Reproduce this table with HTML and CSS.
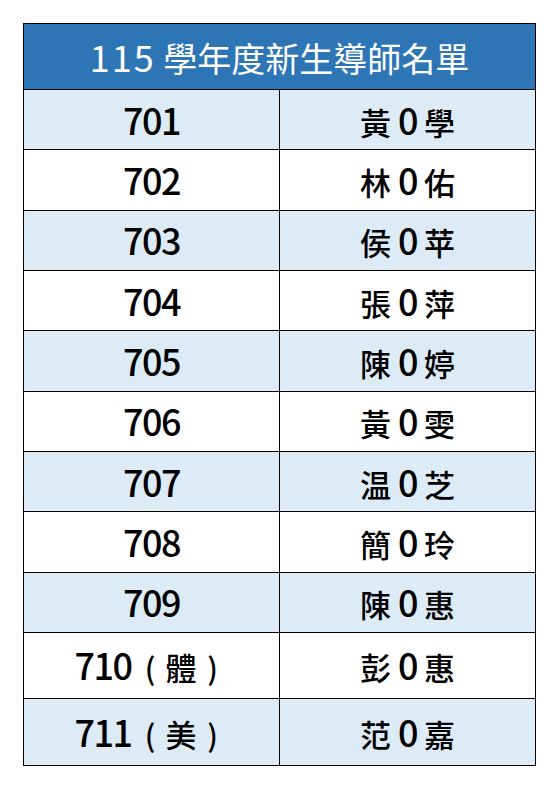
FILE: index.html
```html
<!DOCTYPE html>
<html lang="zh-Hant">
<head>
<meta charset="utf-8">
<title>115 學年度新生導師名單</title>
<link rel="stylesheet" href="styles.css">
</head>
<body>
<div class="sheet">
  <div class="cell head"><span class="txt"><span class="num">115</span> 學年度新生導師名單</span></div>

  <div class="cell alt"><span class="txt num">701</span></div>
  <div class="cell alt"><span class="txt">黃 <span class="num">0</span> 學</span></div>

  <div class="cell"><span class="txt num">702</span></div>
  <div class="cell"><span class="txt">林 <span class="num">0</span> 佑</span></div>

  <div class="cell alt"><span class="txt num">703</span></div>
  <div class="cell alt"><span class="txt">侯 <span class="num">0</span> 苹</span></div>

  <div class="cell"><span class="txt num">704</span></div>
  <div class="cell"><span class="txt">張 <span class="num">0</span> 萍</span></div>

  <div class="cell alt"><span class="txt num">705</span></div>
  <div class="cell alt"><span class="txt">陳 <span class="num">0</span> 婷</span></div>

  <div class="cell"><span class="txt num">706</span></div>
  <div class="cell"><span class="txt">黃 <span class="num">0</span> 雯</span></div>

  <div class="cell alt"><span class="txt num">707</span></div>
  <div class="cell alt"><span class="txt">温 <span class="num">0</span> 芝</span></div>

  <div class="cell"><span class="txt num">708</span></div>
  <div class="cell"><span class="txt">簡 <span class="num">0</span> 玲</span></div>

  <div class="cell alt"><span class="txt num">709</span></div>
  <div class="cell alt"><span class="txt">陳 <span class="num">0</span> 惠</span></div>

  <div class="cell"><span class="txt"><span class="num">710</span><span class="paren open">(</span>體<span class="paren close">)</span></span></div>
  <div class="cell"><span class="txt">彭 <span class="num">0</span> 惠</span></div>

  <div class="cell alt"><span class="txt"><span class="num">711</span><span class="paren open">(</span>美<span class="paren close">)</span></span></div>
  <div class="cell alt"><span class="txt">范 <span class="num">0</span> 嘉</span></div>
</div>
</body>
</html>
```

FILE: styles.css
```css
html, body {
  margin: 0;
  padding: 0;
  background: #ffffff;
}

body {
  padding: 23px;
  font-family: "Noto Sans CJK TC", "Noto Sans", sans-serif;
}

.sheet {
  width: 513px;
  box-sizing: border-box;
  display: grid;
  grid-template-columns: 255px 255px;
  grid-template-rows: 65px repeat(9, 59.33px) 65px 66px;
  gap: 1px;
  padding: 1px;
  background: #000000;
}

.cell {
  background: #ffffff;
  display: flex;
  align-items: center;
  justify-content: center;
  padding-bottom: 2px;
  box-sizing: border-box;
  font-size: 31px;
  font-weight: 500;
  color: #000000;
  line-height: 1;
  white-space: nowrap;
}

.txt {
  display: block;
}

.cell.alt {
  background: #ddebf7;
}

.cell.head {
  grid-column: 1 / 3;
  padding-bottom: 0;
  background: #2e75b6;
  color: #ffffff;
  font-weight: 400;
  font-size: 34px;
}

.num {
  font-size: 36px;
  letter-spacing: -1.5px;
}

.head .num {
  font-size: 36px;
  letter-spacing: 2px;
}

.paren {
  display: inline-block;
  box-sizing: border-box;
  width: 32px;
  text-align: center;
  font-size: 30px;
}

.paren.open {
  width: 34px;
  padding-left: 3px;
}
```
